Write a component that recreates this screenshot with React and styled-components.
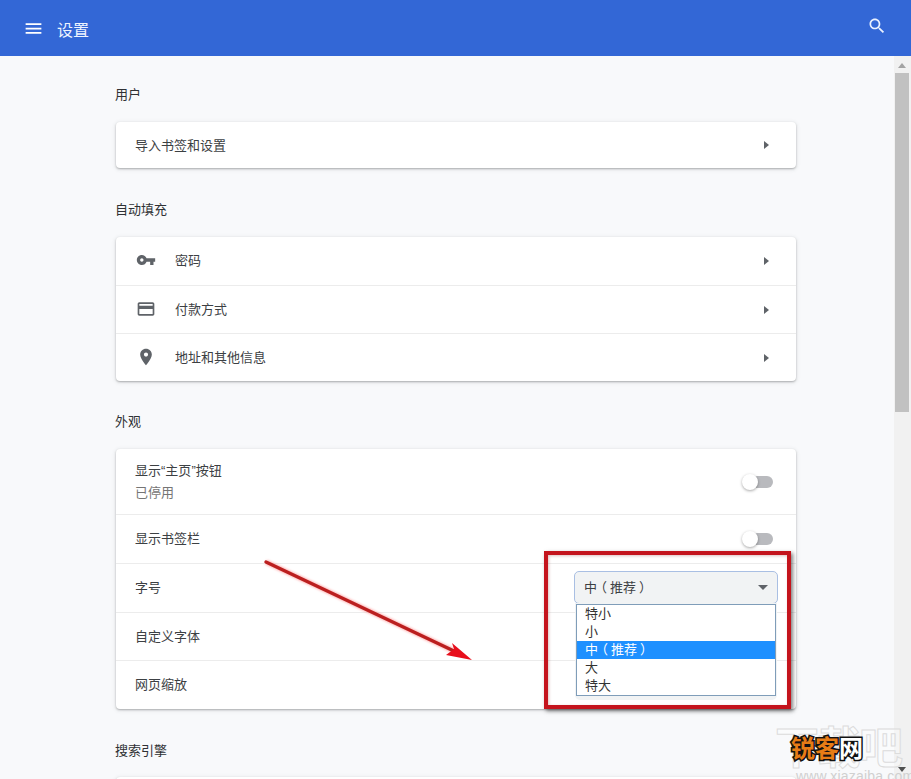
import React from 'react';
import styled, { createGlobalStyle, css } from 'styled-components';

const Global = createGlobalStyle`
  html, body { margin: 0; padding: 0; height: 100%; overflow: hidden; }
  body { font-family: "Noto Sans CJK SC", "Liberation Sans", sans-serif; font-size: 13px; color: #333; background: #f8f9fb; text-spacing-trim: space-all; }
  * { box-sizing: border-box; }
`;

const Page = styled.div`
  position: relative;
  width: 911px;
  height: 779px;
  overflow: hidden;
  display: flex;
  flex-direction: column;
`;
const Header = styled.header`
  flex: 0 0 56px;
  background: #3367d6;
  color: #fff;
  display: flex;
  align-items: center;
  padding: 0 24px 0 23px;
`;
const HeaderTitle = styled.h1`
  margin: 0 0 0 13px;
  font-size: 16px;
  font-weight: 400;
  line-height: 20px;
  flex: 1;
  position: relative;
  top: 1px;
  color: #eef4ff;
`;
const MenuIcon = styled.svg`
  width: 21px;
  height: 21px;
  fill: #fff;
  display: block;
`;
const SearchIcon = styled.svg`
  width: 20px;
  height: 20px;
  fill: #eaf1ff;
  display: block;
  position: relative;
  top: -2px;
`;
const Body = styled.div`
  flex: 1;
  min-height: 0;
  display: flex;
`;
const Main = styled.main`
  flex: 1;
  min-width: 0;
  overflow: hidden;
  padding: 28px 0 0 116px;
`;
const Column = styled.div`
  width: 680px;
`;
const Section = styled.section`
  margin-bottom: ${p => p.$below || 31}px;
`;
const SectionTitle = styled.h2`
  margin: 0 0 ${p => p.$gap || 17}px -1px;
  font-size: 13px;
  font-weight: 400;
  line-height: 20px;
  color: #2f3134;
`;
const Card = styled.div`
  background: #fff;
  border-radius: 4px;
  box-shadow: 0 1px 2px rgba(60, 64, 67, .35), 0 1px 5px rgba(60, 64, 67, .14);
`;
const Caret = styled.span`
  width: 0;
  height: 0;
  margin-right: 5px;
  border-style: solid;
  border-width: 4.5px 0 4.5px 5px;
  border-color: transparent transparent transparent #5f6368;
`;
const Toggle = styled.span`
  position: relative;
  width: 30px;
  height: 12px;
  margin-right: 1px;
  border-radius: 6px;
  background: #b9babe;
  &::before {
    content: '';
    position: absolute;
    left: -1px;
    top: -2px;
    width: 16px;
    height: 16px;
    border-radius: 50%;
    background: #fff;
    box-shadow: 0 1px 3px rgba(0, 0, 0, .35);
  }
`;
const Row = styled.div`
  position: relative;
  height: ${p => p.$h || 48}px;
  padding: 0 22px 0 19px;
  display: flex;
  align-items: center;
  border-top: ${p => (p.$first ? 'none' : '1px solid #ececec')};
  ${p => !p.$flat && css`
    padding-bottom: 2px;
    ${Caret}, ${Toggle} { margin-top: 2px; }
  `}
`;
const RowIcon = styled.svg`
  width: 20px;
  height: 20px;
  fill: #5f6368;
  flex: none;
  margin: 0 19px 0 1px;
`;
const RowLabel = styled.div`
  flex: 1;
  line-height: 20px;
  color: #3c4043;
`;
const Quote = styled.span`
  font-family: "Liberation Sans", sans-serif;
`;
const RowSub = styled.div`
  line-height: 20px;
  color: #757575;
  margin-top: 1px;
`;
const Select = styled.div`
  position: absolute;
  left: 458px;
  top: 7px;
  width: 204px;
  height: 33px;
  padding: 0 10px 2px 9px;
  display: flex;
  align-items: center;
  justify-content: space-between;
  background: #f1f3f4;
  border: 1.5px solid #a9bfe3;
  border-radius: 5px;
  z-index: 2;
  color: #3c4043;
`;
const SelectArrow = styled.span`
  width: 0;
  height: 0;
  border-style: solid;
  border-width: 5px 5px 0 5px;
  margin: 2px -1px 0 0;
  border-color: #5f6368 transparent transparent transparent;
`;
const SelectBacking = styled.div`
  position: absolute;
  left: 459px;
  top: 39px;
  width: 202px;
  height: 97px;
  background: #f1f3f4;
  border-radius: 0 0 5px 5px;
  z-index: 2;
`;
const List = styled.ul`
  position: absolute;
  left: 460px;
  top: 40px;
  width: 200px;
  height: 92px;
  margin: 0;
  padding: 0;
  list-style: none;
  background: #fff;
  border: 1px solid #7f9db9;
  z-index: 3;
`;
const Option = styled.li`
  height: 18px;
  padding-left: 8px;
  line-height: 16px;
  font-size: 13px;
  white-space: nowrap;
  color: ${p => (p.$active ? '#fff' : '#333')};
  background: ${p => (p.$active ? '#1e90ff' : 'transparent')};
`;
const Paren = styled.span`
  position: relative;
  left: ${p => p.$shift}px;
`;
const Scrollbar = styled.div`
  flex: 0 0 17px;
  position: relative;
  background: #f1f1f1;
`;
const ScrollArrowUp = styled.span`
  position: absolute;
  left: 4px;
  top: 7px;
  width: 0;
  height: 0;
  border-style: solid;
  border-width: 0 4px 5px 4px;
  border-color: transparent transparent #a3a3a3 transparent;
`;
const ScrollArrowDown = styled.span`
  position: absolute;
  left: 4px;
  bottom: 7px;
  width: 0;
  height: 0;
  border-style: solid;
  border-width: 5px 4px 0 4px;
  border-color: #505050 transparent transparent transparent;
`;
const ScrollThumb = styled.div`
  position: absolute;
  left: 1px;
  right: 2px;
  top: 17px;
  height: 339px;
  background: #c1c1c1;
`;
const RedBox = styled.div`
  position: absolute;
  left: 544px;
  top: 551px;
  width: 247px;
  height: 158px;
  border: 4px solid #c4141d;
  box-shadow: 2px 2px 4px rgba(0, 0, 0, .5), inset 1px 1px 3px rgba(120, 0, 0, .25);
  z-index: 5;
  pointer-events: none;
`;
const Arrow = styled.svg`
  position: absolute;
  left: 260px;
  top: 555px;
  width: 220px;
  height: 112px;
  z-index: 5;
  overflow: visible;
`;
const Watermark = styled.div`
  position: absolute;
  left: 775px;
  top: 718px;
  width: 136px;
  height: 61px;
  overflow: hidden;
  z-index: 6;
`;
const WatermarkBig = styled.div`
  position: absolute;
  left: 0;
  top: 0;
  font-size: 44px;
  line-height: 54px;
  font-weight: 700;
  letter-spacing: -2px;
  color: rgba(255, 255, 255, .35);
  -webkit-text-stroke: 1px #dcdcdc;
  white-space: nowrap;
`;
const WatermarkUrl = styled.div`
  position: absolute;
  left: 21px;
  top: 50px;
  font-family: "Liberation Sans", sans-serif;
  font-size: 14px;
  line-height: 16px;
  letter-spacing: .2px;
  color: #d0d0d0;
  white-space: nowrap;
`;
const Brand = styled.div`
  position: absolute;
  left: 791px;
  top: 732px;
  z-index: 7;
  font-size: 24px;
  line-height: 30px;
  font-weight: 700;
  white-space: nowrap;
  color: #e77c16;
  -webkit-text-stroke: 3px #111;
  paint-order: stroke fill;
`;
const BrandLight = styled.span`
  color: #fff;
`;

const paths = {
  menu: 'M3 18h18v-2H3v2zm0-5h18v-2H3v2zm0-7v2h18V6H3z',
  search: 'M15.5 14h-.79l-.28-.27C15.41 12.59 16 11.11 16 9.5 16 5.91 13.09 3 9.5 3S3 5.91 3 9.5 5.91 16 9.5 16c1.61 0 3.09-.59 4.23-1.57l.27.28v.79l5 4.99L20.49 19l-4.99-5zm-6 0C7.01 14 5 11.99 5 9.5S7.01 5 9.5 5 14 7.01 14 9.5 11.99 14 9.5 14z',
  key: 'M12.65 10C11.83 7.67 9.61 6 7 6c-3.31 0-6 2.69-6 6s2.69 6 6 6c2.61 0 4.83-1.67 5.65-4H17v4h4v-4h2v-4H12.65zM7 14c-1.1 0-2-.9-2-2s.9-2 2-2 2 .9 2 2-.9 2-2 2z',
  card: 'M20 4H4c-1.11 0-1.99.89-1.99 2L2 18c0 1.11.89 2 2 2h16c1.11 0 2-.89 2-2V6c0-1.11-.89-2-2-2zm0 14H4v-6h16v6zm0-10H4V6h16v2z',
  place: 'M12 2C8.13 2 5 5.13 5 9c0 5.25 7 13 7 13s7-7.75 7-13c0-3.87-3.13-7-7-7zm0 9.5c-1.38 0-2.5-1.12-2.5-2.5s1.12-2.5 2.5-2.5 2.5 1.12 2.5 2.5-1.12 2.5-2.5 2.5z',
};

const Medium = () => (
  <>
    中<Paren $shift={-3}>（</Paren>推荐<Paren $shift={3}>）</Paren>
  </>
);

const options = [
  { key: 'xs', label: '特小' },
  { key: 's', label: '小' },
  { key: 'm', label: <Medium />, active: true },
  { key: 'l', label: '大' },
  { key: 'xl', label: '特大' },
];

export default function App() {
  return (
    <Page>
      <Global />
      <Header>
        <MenuIcon viewBox="0 0 24 24"><path d={paths.menu} /></MenuIcon>
        <HeaderTitle>设置</HeaderTitle>
        <SearchIcon viewBox="0 0 24 24"><path d={paths.search} /></SearchIcon>
      </Header>
      <Body>
        <Main>
          <Column>
            <Section>
              <SectionTitle $gap={18}>用户</SectionTitle>
              <Card>
                <Row $first $flat $h={46}>
                  <RowLabel>导入书签和设置</RowLabel>
                  <Caret />
                </Row>
              </Card>
            </Section>
            <Section $below={30}>
              <SectionTitle $gap={18}>自动填充</SectionTitle>
              <Card>
                <Row $first>
                  <RowIcon viewBox="0 0 24 24"><path d={paths.key} /></RowIcon>
                  <RowLabel>密码</RowLabel>
                  <Caret />
                </Row>
                <Row>
                  <RowIcon viewBox="0 0 24 24"><path d={paths.card} /></RowIcon>
                  <RowLabel>付款方式</RowLabel>
                  <Caret />
                </Row>
                <Row>
                  <RowIcon viewBox="0 0 24 24"><path d={paths.place} /></RowIcon>
                  <RowLabel>地址和其他信息</RowLabel>
                  <Caret />
                </Row>
              </Card>
            </Section>
            <Section>
              <SectionTitle $gap={18}>外观</SectionTitle>
              <Card>
                <Row $first $h={65}>
                  <RowLabel>
                    显示<Quote>“</Quote>主页<Quote>”</Quote>按钮
                    <RowSub>已停用</RowSub>
                  </RowLabel>
                  <Toggle />
                </Row>
                <Row $h={49}>
                  <RowLabel>显示书签栏</RowLabel>
                  <Toggle />
                </Row>
                <Row $h={49}>
                  <RowLabel>字号</RowLabel>
                  <Select>
                    <span><Medium /></span>
                    <SelectArrow />
                  </Select>
                  <SelectBacking />
                  <List>
                    {options.map(o => (
                      <Option key={o.key} $active={o.active}>{o.label}</Option>
                    ))}
                  </List>
                </Row>
                <Row>
                  <RowLabel>自定义字体</RowLabel>
                </Row>
                <Row $h={49}>
                  <RowLabel>网页缩放</RowLabel>
                </Row>
              </Card>
            </Section>
            <Section>
              <SectionTitle>搜索引擎</SectionTitle>
              <Card>
                <Row $first />
              </Card>
            </Section>
          </Column>
        </Main>
        <Scrollbar>
          <ScrollArrowUp />
          <ScrollThumb />
          <ScrollArrowDown />
        </Scrollbar>
      </Body>

      <Arrow viewBox="0 0 220 112">
        <defs>
          <filter id="glow" x="-10%" y="-20%" width="120%" height="140%">
            <feGaussianBlur stdDeviation="1.2" />
          </filter>
        </defs>
        <path d="M6 7 L196 97" stroke="#ff6b6b" strokeWidth="5" opacity=".5" filter="url(#glow)" fill="none" />
        <path d="M6 7 L196 97" stroke="#bb1f1f" strokeWidth="3.4" strokeLinecap="round" fill="none" />
        <path d="M212 105 L192 88 L194 94 L186 100 Z" fill="#e80f1c" />
      </Arrow>
      <RedBox />
      <Watermark>
        <WatermarkBig>下载吧</WatermarkBig>
        <WatermarkUrl>www.xiazaiba.com</WatermarkUrl>
      </Watermark>
      <Brand>锐客<BrandLight>网</BrandLight></Brand>
    </Page>
  );
}
